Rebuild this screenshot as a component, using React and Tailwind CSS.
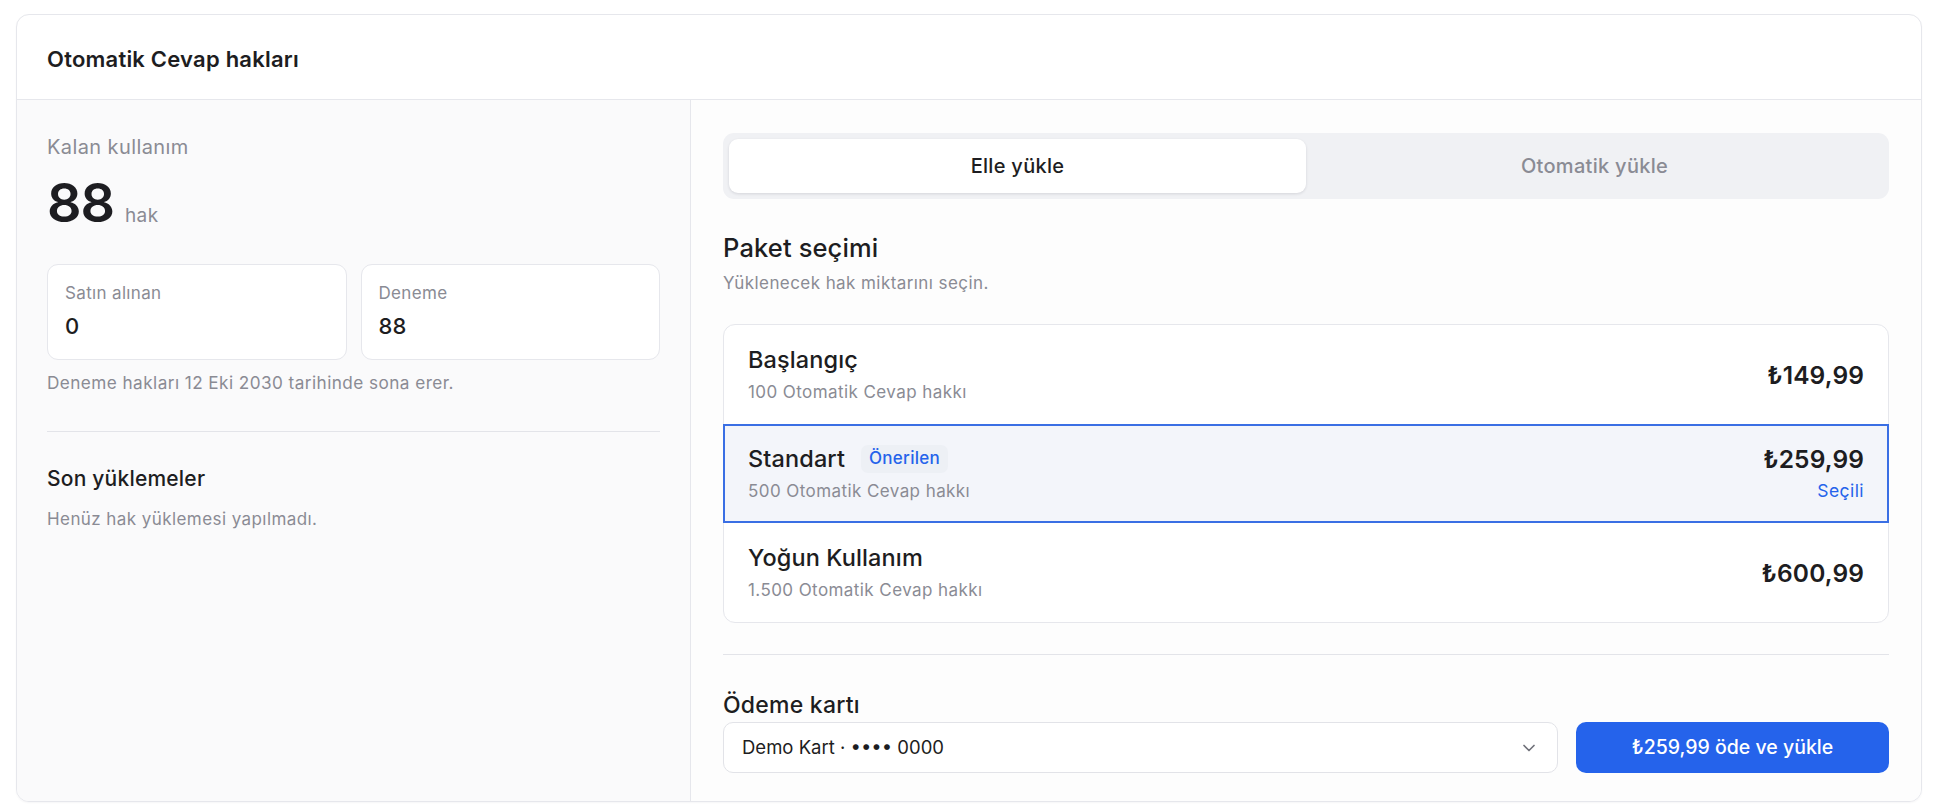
import React, { useState } from 'react';
import { ChevronDown } from 'lucide-react';

const packages = [
  { id: 'start', name: 'Başlangıç', sub: '100 Otomatik Cevap hakkı', price: '₺149,99' },
  { id: 'std', name: 'Standart', sub: '500 Otomatik Cevap hakkı', price: '₺259,99', badge: 'Önerilen' },
  { id: 'heavy', name: 'Yoğun Kullanım', sub: '1.500 Otomatik Cevap hakkı', price: '₺600,99' },
];

const StatBox = ({ label, value }) => (
  <div className="flex-1 rounded-[11px] border border-[#e6e7ec] bg-white px-[17px] pt-[17px] pb-[19px]">
    <div className="text-[17px] leading-[22px] tracking-[0.02em] text-[#8a8b94]">{label}</div>
    <div className="mt-[8px] text-[22px] leading-[28px] font-medium tracking-[0.01em] text-[#1d1d21]">{value}</div>
  </div>
);

export default function App() {
  const [tab, setTab] = useState('manual');
  const [selected, setSelected] = useState('std');
  const current = packages.find((p) => p.id === selected);

  return (
    <div className="min-h-[811px] bg-white px-4 pt-[14px] font-['Inter','Noto_Sans',sans-serif] text-[#1d1d21]">
      <div className="overflow-hidden rounded-[13px] border border-[#e6e7ec] bg-white shadow-[0_1px_2px_rgba(20,20,40,0.04)]">
        {/* Header */}
        <div className="flex h-[85px] items-center border-b border-[#e6e7ec] px-[30px] pt-[5px]">
          <h2 className="text-[22px] font-semibold tracking-[0.01em]">Otomatik Cevap hakları</h2>
        </div>

        <div className="flex">
          {/* Left: usage summary */}
          <div className="w-[674px] shrink-0 border-r border-[#e6e7ec] bg-[#fafafb] px-[30px] pt-[34px]">
            <div className="text-[20px] leading-[26px] tracking-[0.02em] text-[#8a8b94]">Kalan kullanım</div>
            <div className="mt-4 flex items-baseline gap-[11px]">
              <span className="text-[54px] leading-none font-semibold tracking-[-0.02em]">88</span>
              <span className="text-[19px] tracking-[0.02em] text-[#8a8b94]">hak</span>
            </div>

            <div className="mt-[33px] flex gap-[14px]">
              <StatBox label="Satın alınan" value="0" />
              <StatBox label="Deneme" value="88" />
            </div>
            <p className="mt-[12px] text-[17.2px] leading-[22px] tracking-[0.025em] text-[#8a8b94]">
              Deneme hakları 12 Eki 2030 tarihinde sona erer.
            </p>

            <div className="mt-[37px] h-px bg-[#e3e4e9]" />

            <h3 className="mt-[33px] text-[21px] leading-[28px] font-medium tracking-[0.01em]">Son yüklemeler</h3>
            <p className="mt-[15px] text-[17px] leading-[22px] tracking-[0.025em] text-[#8a8b94]">
              Henüz hak yüklemesi yapılmadı.
            </p>
          </div>

          {/* Right: top-up */}
          <div className="flex-1 bg-[#fdfdfd] px-[32px] pt-[33px] pb-[28px]">
            <div className="grid h-[66px] grid-cols-2 rounded-[11px] bg-[#f0f1f4] p-[6px]">
              <button
                onClick={() => setTab('manual')}
                className={`rounded-[9px] text-[20px] font-medium tracking-[0.015em] ${
                  tab === 'manual' ? 'bg-white text-[#1d1d21] shadow-[0_1px_3px_rgba(20,20,40,0.12)]' : 'text-[#8a8b94]'
                }`}
              >
                Elle yükle
              </button>
              <button
                onClick={() => setTab('auto')}
                className={`rounded-[9px] text-[20px] font-medium tracking-[0.015em] ${
                  tab === 'auto' ? 'bg-white text-[#1d1d21] shadow-[0_1px_3px_rgba(20,20,40,0.12)]' : 'text-[#8a8b94]'
                }`}
              >
                Otomatik yükle
              </button>
            </div>

            <h3 className="mt-[35px] text-[25.5px] leading-[28px] font-medium tracking-[0.005em]">Paket seçimi</h3>
            <p className="mt-[10px] text-[17px] leading-[22px] tracking-[0.025em] text-[#8a8b94]">
              Yüklenecek hak miktarını seçin.
            </p>

            {/* Package list */}
            <div className="mt-[30px] rounded-[12px] border border-[#e6e7ec] bg-white">
              {packages.map((p, i) => {
                const active = p.id === selected;
                return (
                  <button
                    key={p.id}
                    onClick={() => setSelected(p.id)}
                    className={`-mx-px flex h-[99px] w-[calc(100%+2px)] items-center justify-between text-left ${
                      active ? 'border-2 border-[#3a6fe4] bg-[#f3f5fa] px-[23px]' : 'px-[25px]'
                    } ${i === 0 ? 'rounded-t-[12px]' : ''} ${i === packages.length - 1 ? 'rounded-b-[12px]' : ''}`}
                  >
                    <div>
                      <div className="flex items-center gap-[16px]">
                        <span className="text-[23.5px] leading-[28px] font-medium tracking-[0.005em]">{p.name}</span>
                        {p.badge && (
                          <span className="rounded-[7px] bg-[#edf0f5] px-[8px] py-[1px] text-[17px] font-medium tracking-[0.015em] text-[#2563eb]">
                            {p.badge}
                          </span>
                        )}
                      </div>
                      <div className="mt-[7px] text-[17px] leading-[22px] tracking-[0.025em] text-[#8a8b94]">{p.sub}</div>
                    </div>
                    <div className="text-right">
                      <div className="text-[24.5px] leading-[28px] font-semibold tracking-[0.005em]">{p.price}</div>
                      {active && (
                        <div className="mt-[7px] text-[17.5px] leading-[22px] tracking-[0.025em] text-[#2563eb]">Seçili</div>
                      )}
                    </div>
                  </button>
                );
              })}
            </div>

            <div className="mt-[31px] h-px bg-[#e3e4e9]" />

            <div className="mt-[37px] text-[23px] leading-[26px] font-medium tracking-[0.01em]">Ödeme kartı</div>
            <div className="mt-[4px] flex gap-[18px]">
              <div className="flex h-[51px] flex-1 items-center justify-between rounded-[10px] border border-[#e2e3e8] bg-white px-[18px]">
                <span className="text-[18.5px] text-[#1d1d21]">Demo Kart · •••• 0000</span>
                <ChevronDown size={20} strokeWidth={2} className="text-[#6f7079]" />
              </div>
              <button className="h-[51px] w-[313px] rounded-[10px] bg-[#2563eb] text-[19.5px] font-medium text-white">
                {current.price} öde ve yükle
              </button>
            </div>
          </div>
        </div>
      </div>
    </div>
  );
}
